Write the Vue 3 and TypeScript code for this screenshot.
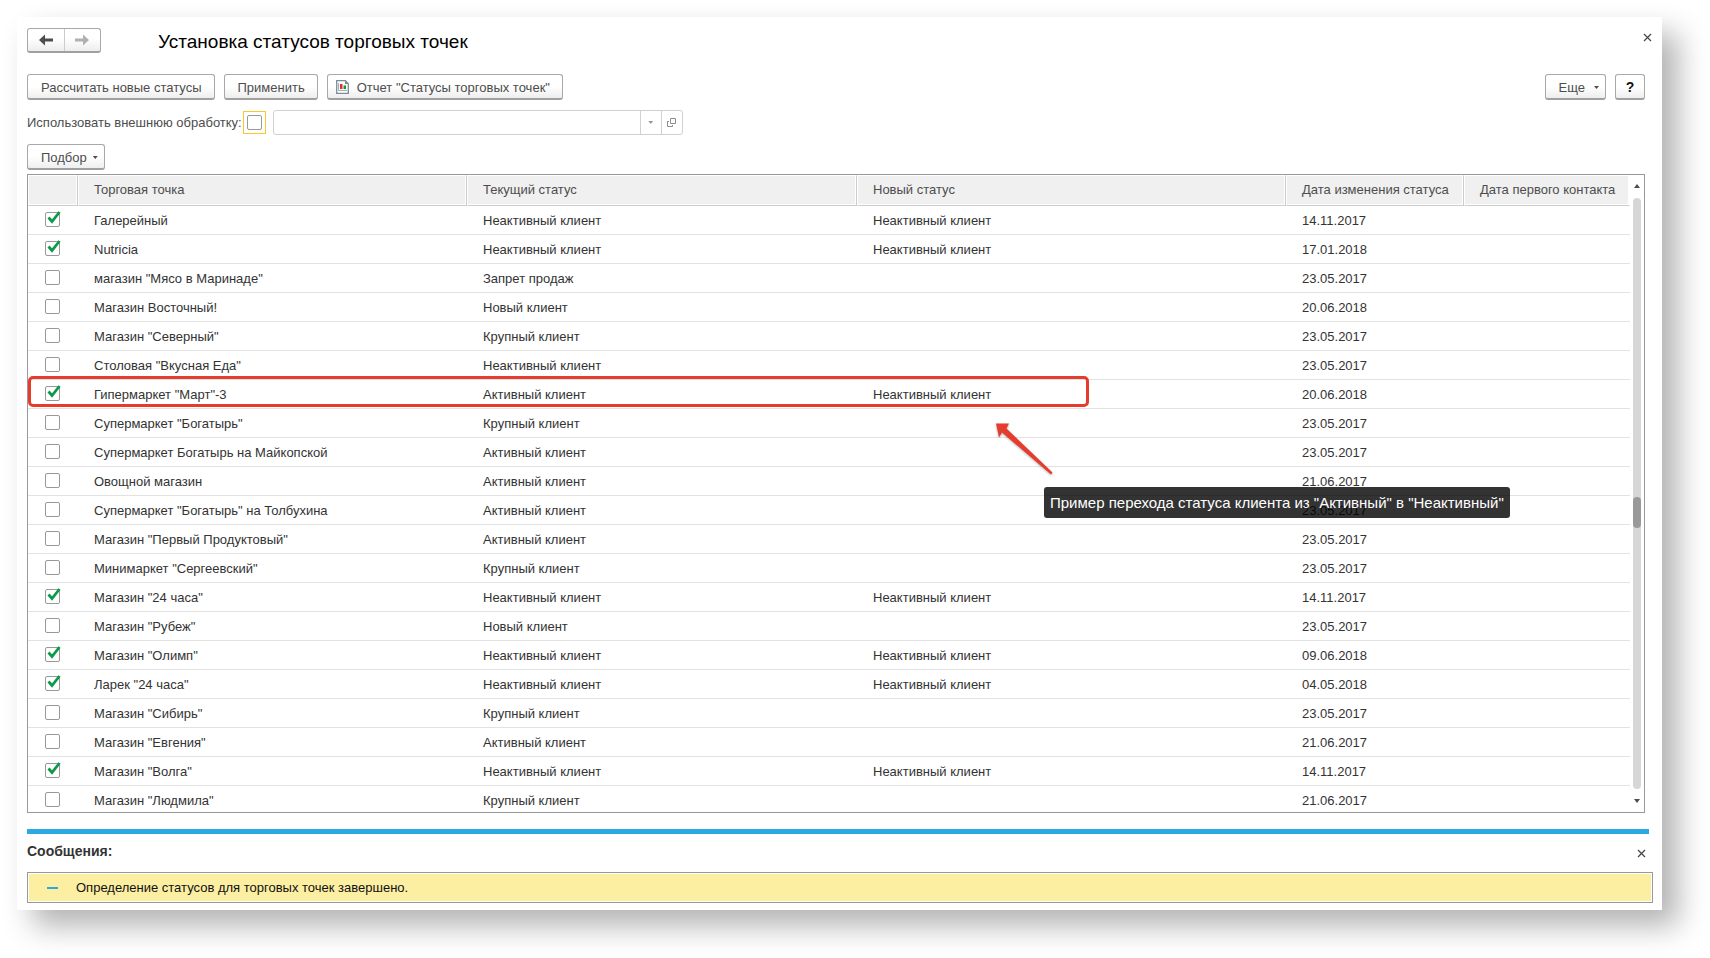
<script setup lang="ts">
import { reactive, ref } from 'vue'

interface Outlet {
  checked: boolean
  name: string
  current: string
  next: string
  changed: string
}

const ACTIVE = 'Активный клиент'
const INACTIVE = 'Неактивный клиент'
const LARGE = 'Крупный клиент'
const FRESH = 'Новый клиент'

const row = (checked: boolean, name: string, current: string, changed: string): Outlet => ({
  checked,
  name,
  current,
  next: checked ? INACTIVE : '',
  changed,
})

const outlets = reactive<Outlet[]>([
  row(true, 'Галерейный', INACTIVE, '14.11.2017'),
  row(true, 'Nutricia', INACTIVE, '17.01.2018'),
  row(false, 'магазин "Мясо в Маринаде"', 'Запрет продаж', '23.05.2017'),
  row(false, 'Магазин Восточный!', FRESH, '20.06.2018'),
  row(false, 'Магазин "Северный"', LARGE, '23.05.2017'),
  row(false, 'Столовая "Вкусная Еда"', INACTIVE, '23.05.2017'),
  row(true, 'Гипермаркет "Март"-3', ACTIVE, '20.06.2018'),
  row(false, 'Супермаркет "Богатырь"', LARGE, '23.05.2017'),
  row(false, 'Супермаркет Богатырь на Майкопской', ACTIVE, '23.05.2017'),
  row(false, 'Овощной магазин', ACTIVE, '21.06.2017'),
  row(false, 'Супермаркет "Богатырь" на Толбухина', ACTIVE, '23.05.2017'),
  row(false, 'Магазин "Первый Продуктовый"', ACTIVE, '23.05.2017'),
  row(false, 'Минимаркет "Сергеевский"', LARGE, '23.05.2017'),
  row(true, 'Магазин "24 часа"', INACTIVE, '14.11.2017'),
  row(false, 'Магазин "Рубеж"', FRESH, '23.05.2017'),
  row(true, 'Магазин "Олимп"', INACTIVE, '09.06.2018'),
  row(true, 'Ларек "24 часа"', INACTIVE, '04.05.2018'),
  row(false, 'Магазин "Сибирь"', LARGE, '23.05.2017'),
  row(false, 'Магазин "Евгения"', ACTIVE, '21.06.2017'),
  row(true, 'Магазин "Волга"', INACTIVE, '14.11.2017'),
  row(false, 'Магазин "Людмила"', LARGE, '21.06.2017'),
])

const useExternal = ref(false)
const externalName = ref('')
</script>

<template>
  <div class="page">
    <main class="window">
      <header class="titlebar">
        <div class="nav">
          <button type="button" aria-label="Назад">
            <svg width="14" height="12" viewBox="0 0 14 12"><path d="M0 6 6 .5v4h8v3H6v4z" fill="#4d4d4d" /></svg>
          </button>
          <button type="button" aria-label="Вперед">
            <svg width="14" height="12" viewBox="0 0 14 12"><path d="M14 6 8 .5v4H0v3h8v4z" fill="#b0b0b0" /></svg>
          </button>
        </div>
        <h1>Установка статусов торговых точек</h1>
        <button type="button" class="close" aria-label="Закрыть">
          <svg width="9" height="9" viewBox="0 0 9 9"><path d="m1 1 7 7M8 1 1 8" stroke="#444" stroke-width="1.2" /></svg>
        </button>
      </header>

      <div class="toolbar">
        <button type="button" class="btn">Рассчитать новые статусы</button>
        <button type="button" class="btn">Применить</button>
        <button type="button" class="btn report">
          <svg width="13" height="14" viewBox="0 0 13 14">
            <path d="M.7.7h8.6l3 3v9.6H.7z" fill="#fff" stroke="#7b8b99" stroke-width="1.3" />
            <path d="M9 .5V4h3.5z" fill="#7b8b99" />
            <path d="M2.5 3v7.5H11" fill="none" stroke="#9db0bf" />
            <path d="M4 4h2.5v5H4z" fill="#f02a20" />
            <path d="M7.5 5.500H10V9H7.500z" fill="#149a28" />
          </svg>
          <span>Отчет "Статусы торговых точек"</span>
        </button>
        <button type="button" class="btn menu more">Еще <i class="caret"></i></button>
        <button type="button" class="btn help">?</button>
      </div>

      <div class="external">
        <label for="use-external">Использовать внешнюю обработку:</label>
        <span class="focus"><input id="use-external" v-model="useExternal" type="checkbox" class="box" /></span>
        <div class="combo">
          <input v-model="externalName" type="text" aria-label="Внешняя обработка" />
          <button type="button" aria-label="Выбрать из списка"><i class="caret pale"></i></button>
          <button type="button" aria-label="Открыть">
            <svg width="9" height="9" viewBox="0 0 9 9" fill="none" stroke="#8c8c8c"><path d="M3.500.5h5v5h-5zM2 3.500H.5v5h5V7" /></svg>
          </button>
        </div>
      </div>

      <div class="pick">
        <button type="button" class="btn menu">Подбор <i class="caret"></i></button>
      </div>

      <section class="grid">
        <table>
          <colgroup>
            <col class="c-check" /><col class="c-name" /><col class="c-current" /><col /><col class="c-changed" /><col class="c-first" />
          </colgroup>
          <thead>
            <tr>
              <th></th>
              <th>Торговая точка</th>
              <th>Текущий статус</th>
              <th>Новый статус</th>
              <th>Дата изменения статуса</th>
              <th>Дата первого контакта</th>
            </tr>
          </thead>
          <tbody>
            <tr v-for="o in outlets" :key="o.name">
              <td class="pickcell">
                <span class="tick">
                  <input v-model="o.checked" type="checkbox" class="box" :aria-label="o.name" />
                  <svg v-if="o.checked" width="14" height="13" viewBox="0 0 14 13"><path d="M1.500 6.500 5 10.500 12.500 1" fill="none" stroke="#0b9a4a" stroke-width="2.800" /></svg>
                </span>
              </td>
              <td>{{ o.name }}</td>
              <td>{{ o.current }}</td>
              <td>{{ o.next }}</td>
              <td>{{ o.changed }}</td>
              <td></td>
            </tr>
          </tbody>
        </table>
        <div class="scroll">
          <i class="arrow up"></i>
          <div class="track"><div class="thumb"></div></div>
          <i class="arrow down"></i>
        </div>

        <div class="mark"></div>
        <svg class="pointer" width="58" height="54" viewBox="0 0 58 54">
          <path d="M0 .5 13 .5 10.500 5.500 56.500 49.500 55 51.500 6 9.500 3 14.500z" fill="#e53c2e" />
        </svg>
        <div class="note">Пример перехода статуса клиента из "Активный" в "Неактивный"</div>
      </section>

      <section class="messages">
        <div class="messages-head">
          <h2>Сообщения:</h2>
          <button type="button" class="close" aria-label="Закрыть сообщения">
            <svg width="9" height="9" viewBox="0 0 9 9"><path d="m1 1 7 7M8 1 1 8" stroke="#444" stroke-width="1.2" /></svg>
          </button>
        </div>
        <div class="message"><p><i class="dash"></i>Определение статусов для торговых точек завершено.</p></div>
      </section>
    </main>
  </div>
</template>

<style>
body {
  margin: 0;
  background: #fff;
}
</style>

<style scoped>
* {
  box-sizing: border-box;
}
.page {
  padding: 17px 48px 48px 17px;
  font: 13px/16px "Liberation Sans", Arial, sans-serif;
  color: #333;
  overflow: hidden;
}
.window {
  padding: 11px 17px 7px 10px;
  background: #fff;
  box-shadow: 16px 16px 28px rgba(0, 0, 0, 0.3);
}
button,
input {
  font: inherit;
  margin: 0;
  padding: 0;
}
button {
  border: 0;
  background: none;
  color: #4d4d4d;
}
.titlebar {
  display: flex;
  height: 25px;
}
.nav {
  display: flex;
  width: 74px;
  border: 1px solid #a8a8a8;
  border-bottom: 2px solid #a0a0a0;
  border-radius: 3px;
  background: linear-gradient(#fff 40%, #eee);
}
.nav button {
  display: flex;
  flex: 1;
  align-items: center;
  justify-content: center;
}
.nav button + button {
  border-left: 1px solid #ccc;
}
h1 {
  margin: 0 auto 0 57px;
  font-size: 19px;
  line-height: 27px;
  font-weight: 400;
  color: #000;
}
.close {
  display: flex;
}
.titlebar .close {
  margin: 5px -7px 0 0;
}
.toolbar {
  display: flex;
  gap: 9px;
  margin-top: 21px;
}
.btn {
  display: flex;
  align-items: center;
  height: 26px;
  padding: 2px 12px 0 13px;
  border: 1px solid #a8a8a8;
  border-bottom: 2px solid #a0a0a0;
  border-radius: 3px;
  background: linear-gradient(#fff 50%, #eee);
  white-space: nowrap;
}
.report {
  gap: 8px;
  padding-left: 8px;
}
.report svg {
  margin-bottom: 2px;
}
.menu {
  gap: 6px;
  padding-right: 6px;
}
.more {
  gap: 9px;
  margin-left: auto;
}
.help {
  width: 30px;
  padding: 1px 0 0;
  justify-content: center;
  font-size: 14px;
  font-weight: 700;
  color: #111;
}
.caret {
  width: 5px;
  height: 3px;
  background: #4d4d4d;
  clip-path: polygon(0 0, 100% 0, 50% 100%);
}
.pale {
  background: #999;
}
.external {
  display: flex;
  align-items: center;
  margin-top: 10px;
  color: #4d4d4d;
}
.focus {
  display: flex;
  margin: 0 7px 0 1px;
  padding: 3px;
  border: 1px solid #fbc62c;
}
.box {
  display: block;
  appearance: none;
  width: 15px;
  height: 15px;
  border: 1px solid #999;
  border-radius: 2px;
  background: #fff;
}
.combo {
  display: flex;
  width: 410px;
  height: 25px;
  border: 1px solid #d0d0d0;
  border-radius: 3px;
}
.combo input {
  flex: 1;
  min-width: 0;
  border: 0;
  outline: 0;
  background: none;
}
.combo button {
  display: flex;
  align-items: center;
  justify-content: center;
  width: 21px;
  border-left: 1px solid #d0d0d0;
}
.pick {
  display: flex;
  margin: 9px 0 4px;
}
.grid {
  position: relative;
  display: flex;
  border: 1px solid #999;
}
table {
  flex: 1;
  table-layout: fixed;
  border-spacing: 0;
}
.c-check {
  width: 50px;
}
.c-name {
  width: 389px;
}
.c-current {
  width: 390px;
}
.c-changed {
  width: 178px;
}
.c-first {
  width: 166px;
}
th {
  height: 31px;
  padding: 0 0 1px 15px;
  border: 1px solid #fff;
  border-right-color: #ccc;
  border-bottom: 1px solid #ccc;
  background: #f0f0f0;
  box-shadow: inset -1px -1px #fff;
  font-weight: 400;
  text-align: left;
  white-space: nowrap;
  color: #4d4d4d;
}
th:first-child {
  padding-left: 0;
}
th:last-child {
  border-right-color: #fff;
}
td {
  padding: 7px 0 5px 16px;
  border-bottom: 1px solid #e2e2e2;
  white-space: nowrap;
}
.pickcell {
  padding: 6px 0 6px 17px;
}
tbody tr:last-child td {
  padding-bottom: 3px;
  border-bottom: 0;
}
tbody tr:last-child .pickcell {
  padding-bottom: 4px;
}
.tick {
  position: relative;
  display: block;
  height: 16px;
}
.tick svg {
  position: absolute;
  left: 2px;
  top: -1px;
  pointer-events: none;
}
.scroll {
  display: flex;
  flex-direction: column;
  align-items: center;
  width: 14px;
  padding: 9px 0;
}
.arrow {
  width: 6px;
  height: 4px;
  background: #4d4d4d;
}
.up {
  clip-path: polygon(0 100%, 50% 0, 100% 100%);
}
.down {
  clip-path: polygon(0 0, 100% 0, 50% 100%);
}
.track {
  flex: 1;
  width: 8px;
  margin: 10px 0;
  border-radius: 4px;
  background: #d6d6d6;
}
.thumb {
  height: 31px;
  margin-top: 299px;
  border-radius: 4px;
  background: #999;
}
.mark {
  position: absolute;
  left: 0;
  top: 201px;
  width: 1061px;
  height: 31px;
  border: 3px solid #e53c2e;
  border-radius: 5px;
  pointer-events: none;
}
.pointer {
  position: absolute;
  left: 968px;
  top: 248px;
  filter: drop-shadow(0 1px 1px rgba(0, 0, 0, 0.3));
}
.note {
  position: absolute;
  left: 1016px;
  top: 312px;
  padding: 0 6px;
  border-radius: 3px;
  background: rgba(0, 0, 0, 0.8);
  font-size: 15px;
  line-height: 31px;
  white-space: nowrap;
  color: #fff;
}
.messages {
  margin-top: 16px;
}
.messages-head {
  display: flex;
  align-items: center;
  justify-content: space-between;
  height: 43px;
  margin-right: -4px;
  padding: 0 3px 0 0;
  border-top: 5px solid #29abe2;
}
h2 {
  margin: 0;
  padding-bottom: 4px;
  font-size: 14px;
  line-height: 16px;
}
.message {
  margin-right: -8px;
  padding: 1px;
  border: 1px solid #999;
}
p {
  display: flex;
  align-items: center;
  margin: 0;
  height: 27px;
  padding-left: 18px;
  background: #fcefa1;
  color: #111;
}
.dash {
  width: 11px;
  height: 2px;
  margin-right: 18px;
  background: #29abe2;
}
</style>
